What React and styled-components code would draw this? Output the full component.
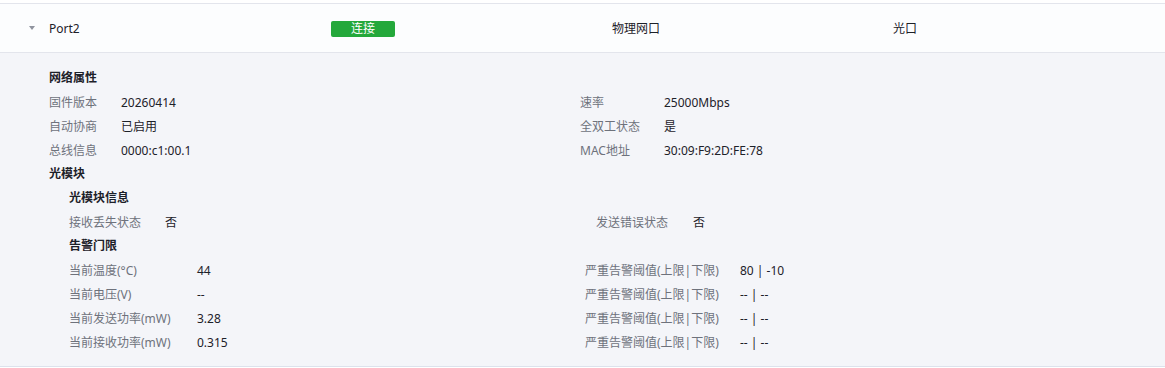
import React from "react";
import styled, { createGlobalStyle } from "styled-components";

const Global = createGlobalStyle`
  html, body { margin: 0; padding: 0; background: #ffffff; }
  body {
    font-family: "Noto Sans", "Noto Sans CJK SC", sans-serif;
    font-size: 12px;
    color: #1d2129;
  }
`;

const Page = styled.div`
  padding-top: 3px;
  width: 1165px;
`;

const HeaderRow = styled.div`
  display: grid;
  grid-template-columns: 49px 282px 281px 281px 1fr;
  align-items: center;
  box-sizing: border-box;
  height: 50px;
  padding-top: 1px;
  background: #fcfdfe;
  border-top: 1px solid #e3e5ec;
  border-bottom: 1px solid #e3e5ec;
`;

const CaretCell = styled.div`
  display: flex;
  justify-content: flex-start;
  padding-left: 29px;
`;

const Caret = styled.span`
  width: 0;
  height: 0;
  border-left: 3.5px solid transparent;
  border-right: 3.5px solid transparent;
  border-top: 4px solid #8f939e;
  margin-top: -2px;
`;

const Cell = styled.div`
  color: #1d2129;
  line-height: 16px;
`;

const Badge = styled.span`
  display: inline-flex;
  align-items: center;
  justify-content: center;
  width: 64px;
  height: 16px;
  background: #24a83b;
  color: #ffffff;
  border-radius: 2px;
  font-size: 12px;
  line-height: 16px;
`;

const Panel = styled.div`
  background: #f4f5f9;
  padding: 13px 0 12px;
  border-bottom: 1px solid #dde2ec;
`;

const Title = styled.div`
  height: 24px;
  line-height: 24px;
  padding-left: ${(p) => p.$indent}px;
  font-weight: 700;
  color: #1d2129;
`;

const Grid = styled.div`
  display: grid;
  padding-left: ${(p) => p.$indent}px;
  grid-template-columns: ${(p) => p.$cols};
  grid-auto-rows: 24px;
  align-items: center;
`;

const Label = styled.div`
  color: #6e727c;
  white-space: nowrap;
`;

const Value = styled.div`
  color: #1d2129;
  white-space: nowrap;
`;

function Pairs({ indent, cols, rows }) {
  return (
    <Grid $indent={indent} $cols={cols}>
      {rows.map((r, i) => (
        <React.Fragment key={i}>
          <Label>{r[0]}</Label>
          <Value>{r[1]}</Value>
          <Label>{r[2]}</Label>
          <Value>{r[3]}</Value>
        </React.Fragment>
      ))}
    </Grid>
  );
}

export default function App() {
  return (
    <>
      <Global />
      <Page>
        <HeaderRow>
          <CaretCell>
            <Caret />
          </CaretCell>
          <Cell>Port2</Cell>
          <Cell>
            <Badge>连接</Badge>
          </Cell>
          <Cell>物理网口</Cell>
          <Cell>光口</Cell>
        </HeaderRow>
        <Panel>
          <Title $indent={49}>网络属性</Title>
          <Pairs
            indent={49}
            cols="72px 459px 84px 1fr"
            rows={[
              ["固件版本", "20260414", "速率", "25000Mbps"],
              ["自动协商", "已启用", "全双工状态", "是"],
              ["总线信息", "0000:c1:00.1", "MAC地址", "30:09:F9:2D:FE:78"],
            ]}
          />
          <Title $indent={49}>光模块</Title>
          <Title $indent={69}>光模块信息</Title>
          <Pairs
            indent={69}
            cols="96px 431px 97px 1fr"
            rows={[["接收丢失状态", "否", "发送错误状态", "否"]]}
          />
          <Title $indent={69}>告警门限</Title>
          <Pairs
            indent={69}
            cols="128px 388px 155px 1fr"
            rows={[
              ["当前温度(°C)", "44", "严重告警阈值(上限|下限)", "80 | -10"],
              ["当前电压(V)", "--", "严重告警阈值(上限|下限)", "-- | --"],
              ["当前发送功率(mW)", "3.28", "严重告警阈值(上限|下限)", "-- | --"],
              ["当前接收功率(mW)", "0.315", "严重告警阈值(上限|下限)", "-- | --"],
            ]}
          />
        </Panel>
      </Page>
    </>
  );
}
